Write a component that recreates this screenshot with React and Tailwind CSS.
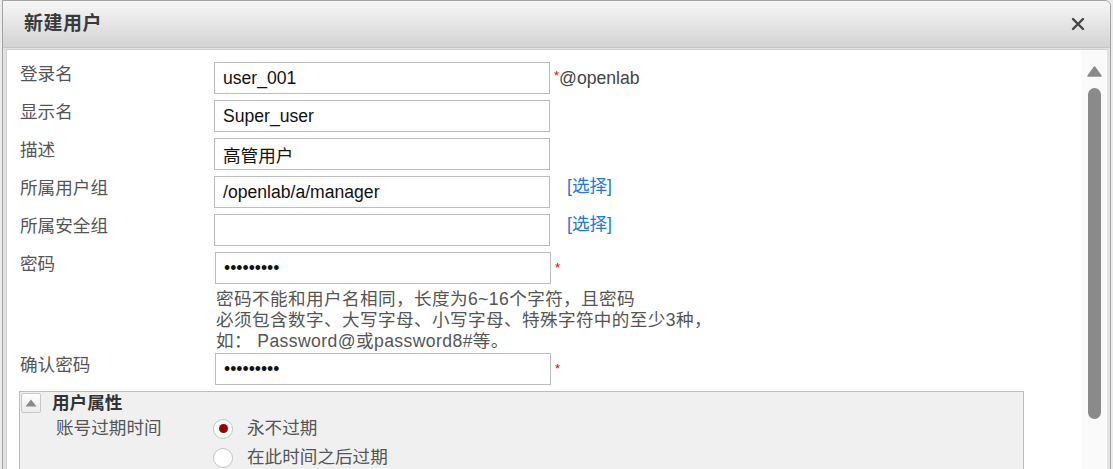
import React, { useState } from 'react';

const font = { fontFamily: '"Liberation Sans", Arial, "Noto Sans CJK SC", sans-serif' };

function Field({ label, value, type = 'text', extra, shift }) {
  return (
    <div className="flex items-start">
      <div className="w-[194px] shrink-0 leading-[24px] text-[#555]">{label}</div>
      <input
        type={type}
        defaultValue={value}
        readOnly
        className={`w-[336px] h-[32px] shrink-0 border border-[#bdbdbd] bg-white px-[8px] text-[17.6px] text-[#111] outline-none ${shift ? 'ml-[1px]' : ''}`}
        style={font}
      />
      {extra}
    </div>
  );
}

function Radio({ checked, label }) {
  return (
    <div className="flex items-center h-[29px]">
      <span className="w-[20px] h-[20px] rounded-full border border-[#c4c4c4] bg-white flex items-center justify-center shrink-0">
        {checked && <span className="w-[9px] h-[9px] rounded-full bg-[#9b0000]" />}
      </span>
      <span className="ml-[14px] text-[#555]">{label}</span>
    </div>
  );
}

export default function App() {
  const [open, setOpen] = useState(true);
  const star = <span className="text-[#e00] text-[13px] leading-none">*</span>;
  const pick = <a className="ml-[17px] leading-[20px] text-[#2477e0] cursor-pointer">[选择]</a>;

  return (
    <div className="w-[1113px] h-[469px] overflow-hidden bg-[#ececec] pl-[2px] pr-[2px] text-[17.6px]" style={font}>
      <div className="h-[480px] flex flex-col border border-[#a3a3a3] rounded-tr-[6px] overflow-hidden">
        {/* Header */}
        <div className="h-[47px] shrink-0 flex items-center justify-between pl-[21px] pr-[25px] bg-gradient-to-b from-[#f7f7f7] to-[#d3d3d3] border-b border-[#c6c6c6]">
          <span className="text-[19px] font-bold text-[#3a3a3a] tracking-[0.5px]">新建用户</span>
          <svg width="14" height="14" viewBox="0 0 14 14">
            <path d="M2 2 L12 12 M12 2 L2 12" stroke="#444" strokeWidth="2.4" strokeLinecap="round" />
          </svg>
        </div>

        {/* Body */}
        <div className="flex-1 flex bg-[#e2e2e2] pl-[3px] pr-[3px] pt-[1px]">
          <div className="flex-1 flex bg-white border-l border-t border-[#cfcfcf]">
            {/* Form */}
            <div className="flex-1 pl-[13px] pt-[12px] flex flex-col">
              <div className="flex flex-col gap-[6px]">
                <Field
                  label="登录名"
                  value="user_001"
                  extra={
                    <span className="ml-[4px] flex items-start">
                      <span className="text-[#e00] text-[13px] leading-none mt-[7px]">*</span>
                      <span className="text-[#444] leading-[30px] mt-[1px]">@openlab</span>
                    </span>
                  }
                />
                <Field label="显示名" value="Super_user" />
                <Field label="描述" value="高管用户" />
                <Field label="所属用户组" value="/openlab/a/manager" extra={pick} />
                <Field label="所属安全组" value="" extra={pick} />
                <Field
                  label="密码"
                  value="123456789"
                  type="password"
                  shift
                  extra={<span className="ml-[4px] mt-[9px] flex">{star}</span>}
                />
              </div>

              <div className="ml-[196px] mt-[5px] leading-[21px] text-[#555] tracking-[0.4px]">
                <div>密码不能和用户名相同，长度为6~16个字符，且密码</div>
                <div>必须包含数字、大写字母、小写字母、特殊字符中的至少3种，</div>
                <div>如： Password@或password8#等。</div>
              </div>

              <div className="mt-[1px]">
                <Field
                  label="确认密码"
                  value="123456789"
                  type="password"
                  shift
                  extra={<span className="ml-[4px] mt-[9px] flex">{star}</span>}
                />
              </div>

              {/* Section */}
              <div className="mt-[6px] -ml-px w-[1005px] bg-[#f0f0f0] border border-[#bcbcbc] pt-[1px] pl-[1px] pb-[20px]">
                <div className="flex items-center h-[20px]">
                  <button
                    onClick={() => setOpen(!open)}
                    className="w-[20px] h-[20px] border border-[#c8c8c8] bg-gradient-to-b from-[#fdfdfd] to-[#ececec] flex items-center justify-center rounded-[2px]"
                  >
                    <svg width="12" height="8" viewBox="0 0 12 8">
                      <path d="M6 0.5 L11.5 7.5 L0.5 7.5 Z" fill="#8a8a8a" />
                    </svg>
                  </button>
                  <span className="ml-[11px] font-bold text-[#333]">用户属性</span>
                </div>
                {open && (
                  <div className="flex pl-[35px] mt-[1px]">
                    <div className="w-[157px] leading-[29px] text-[#555]">账号过期时间</div>
                    <div className="flex flex-col">
                      <Radio checked label="永不过期" />
                      <Radio label="在此时间之后过期" />
                    </div>
                  </div>
                )}
              </div>
            </div>

            {/* Scrollbar */}
            <div className="w-[26px] shrink-0 bg-[#fafafa] flex flex-col items-center pt-[16px]">
              <svg width="15" height="11" viewBox="0 0 15 11" className="ml-[1px]">
                <path d="M7.5 1 L14 10 L1 10 Z" fill="#8a8a8a" stroke="#8a8a8a" strokeWidth="1.5" strokeLinejoin="round" />
              </svg>
              <div className="mt-[11px] w-[13px] h-[331px] rounded-full bg-[#8a8a8a]" />
            </div>
          </div>
        </div>
      </div>
    </div>
  );
}
